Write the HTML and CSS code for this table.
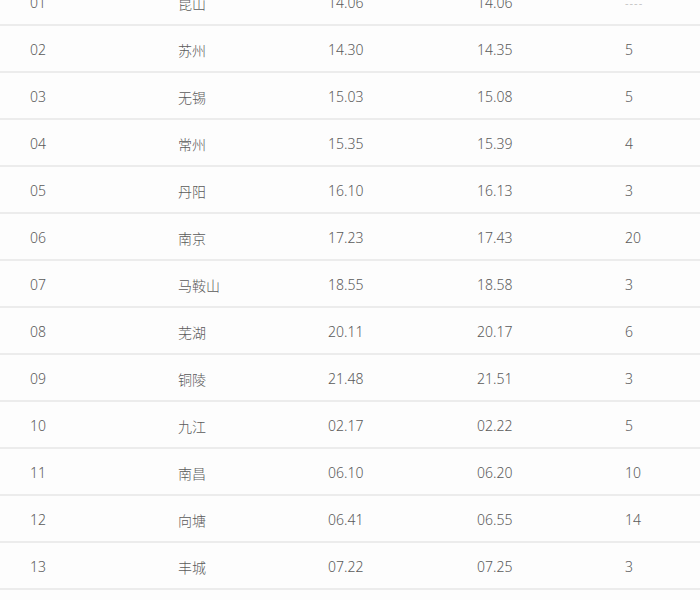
FILE: index.html
```html
<!DOCTYPE html>
<html lang="zh">
<head>
<meta charset="utf-8">
<link rel="stylesheet" href="styles.css">
</head>
<body>
<div class="table">
  <div class="row"><span>01</span><span>昆山</span><span>14.06</span><span>14.06</span><span class="dash">----</span></div>
  <div class="row"><span>02</span><span>苏州</span><span>14.30</span><span>14.35</span><span>5</span></div>
  <div class="row"><span>03</span><span>无锡</span><span>15.03</span><span>15.08</span><span>5</span></div>
  <div class="row"><span>04</span><span>常州</span><span>15.35</span><span>15.39</span><span>4</span></div>
  <div class="row"><span>05</span><span>丹阳</span><span>16.10</span><span>16.13</span><span>3</span></div>
  <div class="row"><span>06</span><span>南京</span><span>17.23</span><span>17.43</span><span>20</span></div>
  <div class="row"><span>07</span><span>马鞍山</span><span>18.55</span><span>18.58</span><span>3</span></div>
  <div class="row"><span>08</span><span>芜湖</span><span>20.11</span><span>20.17</span><span>6</span></div>
  <div class="row"><span>09</span><span>铜陵</span><span>21.48</span><span>21.51</span><span>3</span></div>
  <div class="row"><span>10</span><span>九江</span><span>02.17</span><span>02.22</span><span>5</span></div>
  <div class="row"><span>11</span><span>南昌</span><span>06.10</span><span>06.20</span><span>10</span></div>
  <div class="row"><span>12</span><span>向塘</span><span>06.41</span><span>06.55</span><span>14</span></div>
  <div class="row"><span>13</span><span>丰城</span><span>07.22</span><span>07.25</span><span>3</span></div>
</div>
</body>
</html>
```
FILE: styles.css
```css
html, body {
  margin: 0;
  padding: 0;
  background: #fdfdfd;
  overflow: hidden;
}
body {
  font-family: "Noto Sans", "Noto Sans CJK SC", sans-serif;
  font-weight: 300;
  font-size: 14px;
  color: #5a5a5a;
}
.table {
  margin-top: -21px;
}
.row {
  display: grid;
  grid-template-columns: 149px 149px 149px 148px 1fr;
  height: 45px;
  align-items: center;
  border-bottom: 2px solid #ececec;
}
.row span {
  padding-left: 30px;
  padding-top: 2px;
}
.row span:nth-child(2) { padding-left: 29px; }
.dash {
  color: #aaa;
  font-size: 11px;
  letter-spacing: 1px;
}
```
